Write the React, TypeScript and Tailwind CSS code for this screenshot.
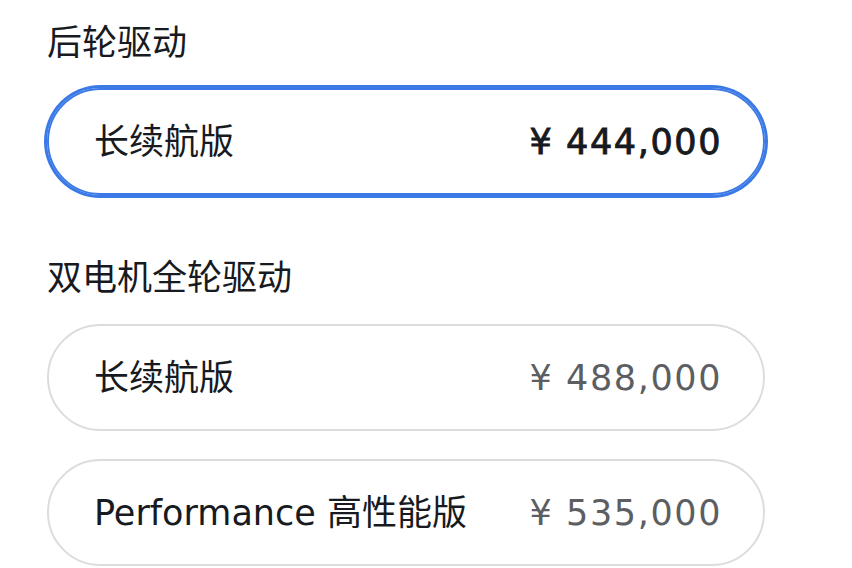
type Option = { name: string; price: string; selected?: boolean };

function Card({ name, price, selected }: Option) {
  return (
    <div
      className={
        selected
          ? "flex h-[107px] w-[718px] items-center justify-between rounded-full border-2 border-[#3b7ae6] pl-[45px] pr-[41px] shadow-[0_0_0_3px_#3b7ae6]"
          : "flex h-[107px] w-[718px] items-center justify-between rounded-full border-2 border-[#dcdcdc] pl-[45px] pr-[41px]"
      }
    >
      <span className="text-[#171a20]">{name}</span>
      <span
        className={
          selected
            ? "tracking-[1.6px] text-[#171a20] [-webkit-text-stroke:0.9px_#171a20]"
            : "tracking-[1.6px] text-[#5c5e62]"
        }
      >
        {price}
      </span>
    </div>
  );
}

export default function App() {
  return (
    <div
      className="flex h-[568px] w-[852px] flex-col bg-white pl-[47px] pt-[22px] text-[35px] leading-[42px]"
      style={{ fontFamily: '"DejaVu Sans", "Noto Sans CJK SC", sans-serif' }}
    >
      <h2 className="font-normal text-[#171a20]">后轮驱动</h2>
      <div className="mt-[24px]">
        <Card name="长续航版" price="¥ 444,000" selected />
      </div>
      <h2 className="mt-[62px] font-normal text-[#171a20]">双电机全轮驱动</h2>
      <div className="mt-[25px] flex flex-col gap-[28px]">
        <Card name="长续航版" price="¥ 488,000" />
        <Card name="Performance 高性能版" price="¥ 535,000" />
      </div>
    </div>
  );
}
